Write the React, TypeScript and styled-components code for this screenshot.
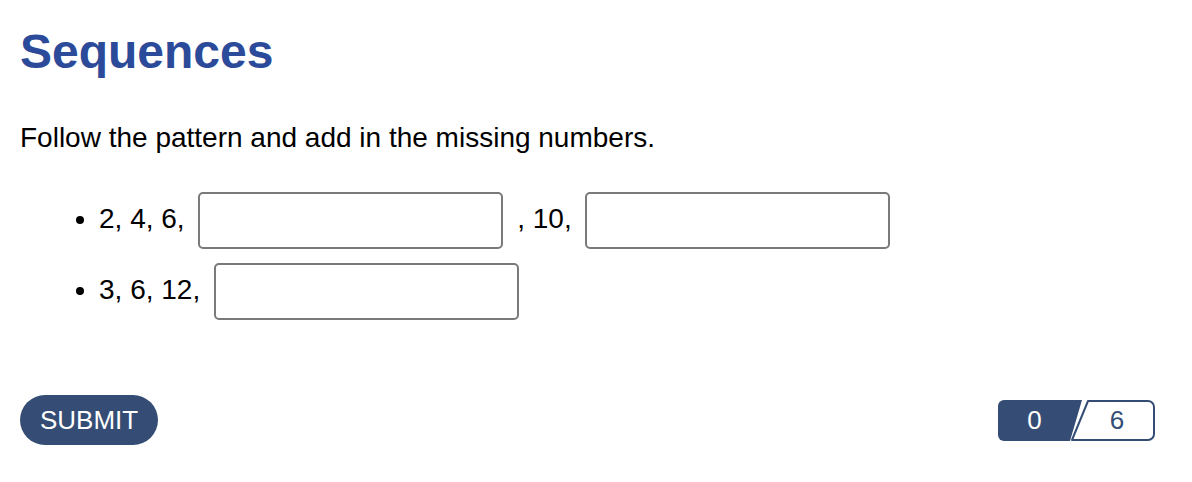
import React from "react";
import styled, { createGlobalStyle } from "styled-components";

const GlobalStyle = createGlobalStyle`
  body {
    margin: 0;
    background: #fff;
    font-family: "Liberation Sans", Arial, Helvetica, sans-serif;
    color: #000;
  }
`;

const Page = styled.div`
  padding: 25px 37px 0 20px;
`;

const Title = styled.h1`
  margin: 0;
  font-size: 48px;
  line-height: 54px;
  font-weight: 700;
  color: #2b4a99;
`;

const Prompt = styled.p`
  margin: 43px 0 0;
  font-size: 28px;
  line-height: 32px;
`;

const Sequences = styled.ul`
  margin: 31px 0 0;
  padding-left: 79px;
  font-size: 28px;
  line-height: 32px;
`;

const Item = styled.li`
  list-style: disc;
`;

const Blank = styled.input`
  box-sizing: border-box;
  width: 305px;
  height: 57px;
  margin: 7px 6px;
  padding: 0 12px;
  border: 2px solid #7a7a7a;
  border-radius: 5px;
  background: #fff;
  font: inherit;
  vertical-align: middle;
  outline: none;
`;

const Footer = styled.div`
  display: flex;
  justify-content: space-between;
  align-items: center;
  margin-top: 68px;
`;

const SubmitButton = styled.button`
  height: 50px;
  padding: 0 20px;
  border: none;
  border-radius: 25px;
  background: #354d75;
  color: #fff;
  font-family: "Liberation Sans", Arial, sans-serif;
  font-size: 26px;
  cursor: pointer;
`;

const Score = styled.div`
  display: flex;
  height: 41px;
`;

const ScoreCell = styled.div<{ $dark?: boolean; $overlap?: number }>`
  position: relative;
  width: 85px;
  height: 41px;
  margin-left: ${(p) => (p.$overlap ? -p.$overlap : 0)}px;
  display: flex;
  align-items: center;
  justify-content: center;
  font-size: 26px;
  color: ${(p) => (p.$dark ? "#fff" : "#354d75")};

  svg {
    position: absolute;
    inset: 0;
  }

  span {
    position: relative;
  }
`;

export default function App() {
  return (
    <>
      <GlobalStyle />
      <Page>
        <Title>Sequences</Title>
        <Prompt>Follow the pattern and add in the missing numbers.</Prompt>
        <Sequences>
          <Item>
            2, 4, 6, <Blank type="text" /> , 10, <Blank type="text" />
          </Item>
          <Item>
            3, 6, 12, <Blank type="text" />
          </Item>
        </Sequences>
        <Footer>
          <SubmitButton>SUBMIT</SubmitButton>
          <Score>
            <ScoreCell $dark>
              <svg width="85" height="41" viewBox="0 0 85 41">
                <path
                  d="M6 0 H84 L72 41 H6 A6 6 0 0 1 0 35 V6 A6 6 0 0 1 6 0 Z"
                  fill="#354d75"
                />
              </svg>
              <span style={{ marginRight: 12 }}>0</span>
            </ScoreCell>
            <ScoreCell $overlap={13}>
              <svg width="85" height="41" viewBox="0 0 85 41">
                <path
                  d="M18 1 H78 A6 6 0 0 1 84 7 V34 A6 6 0 0 1 78 40 H2 Z"
                  fill="#fff"
                  stroke="#354d75"
                  strokeWidth="2"
                  strokeLinejoin="round"
                />
              </svg>
              <span style={{ marginLeft: 9 }}>6</span>
            </ScoreCell>
          </Score>
        </Footer>
      </Page>
    </>
  );
}
